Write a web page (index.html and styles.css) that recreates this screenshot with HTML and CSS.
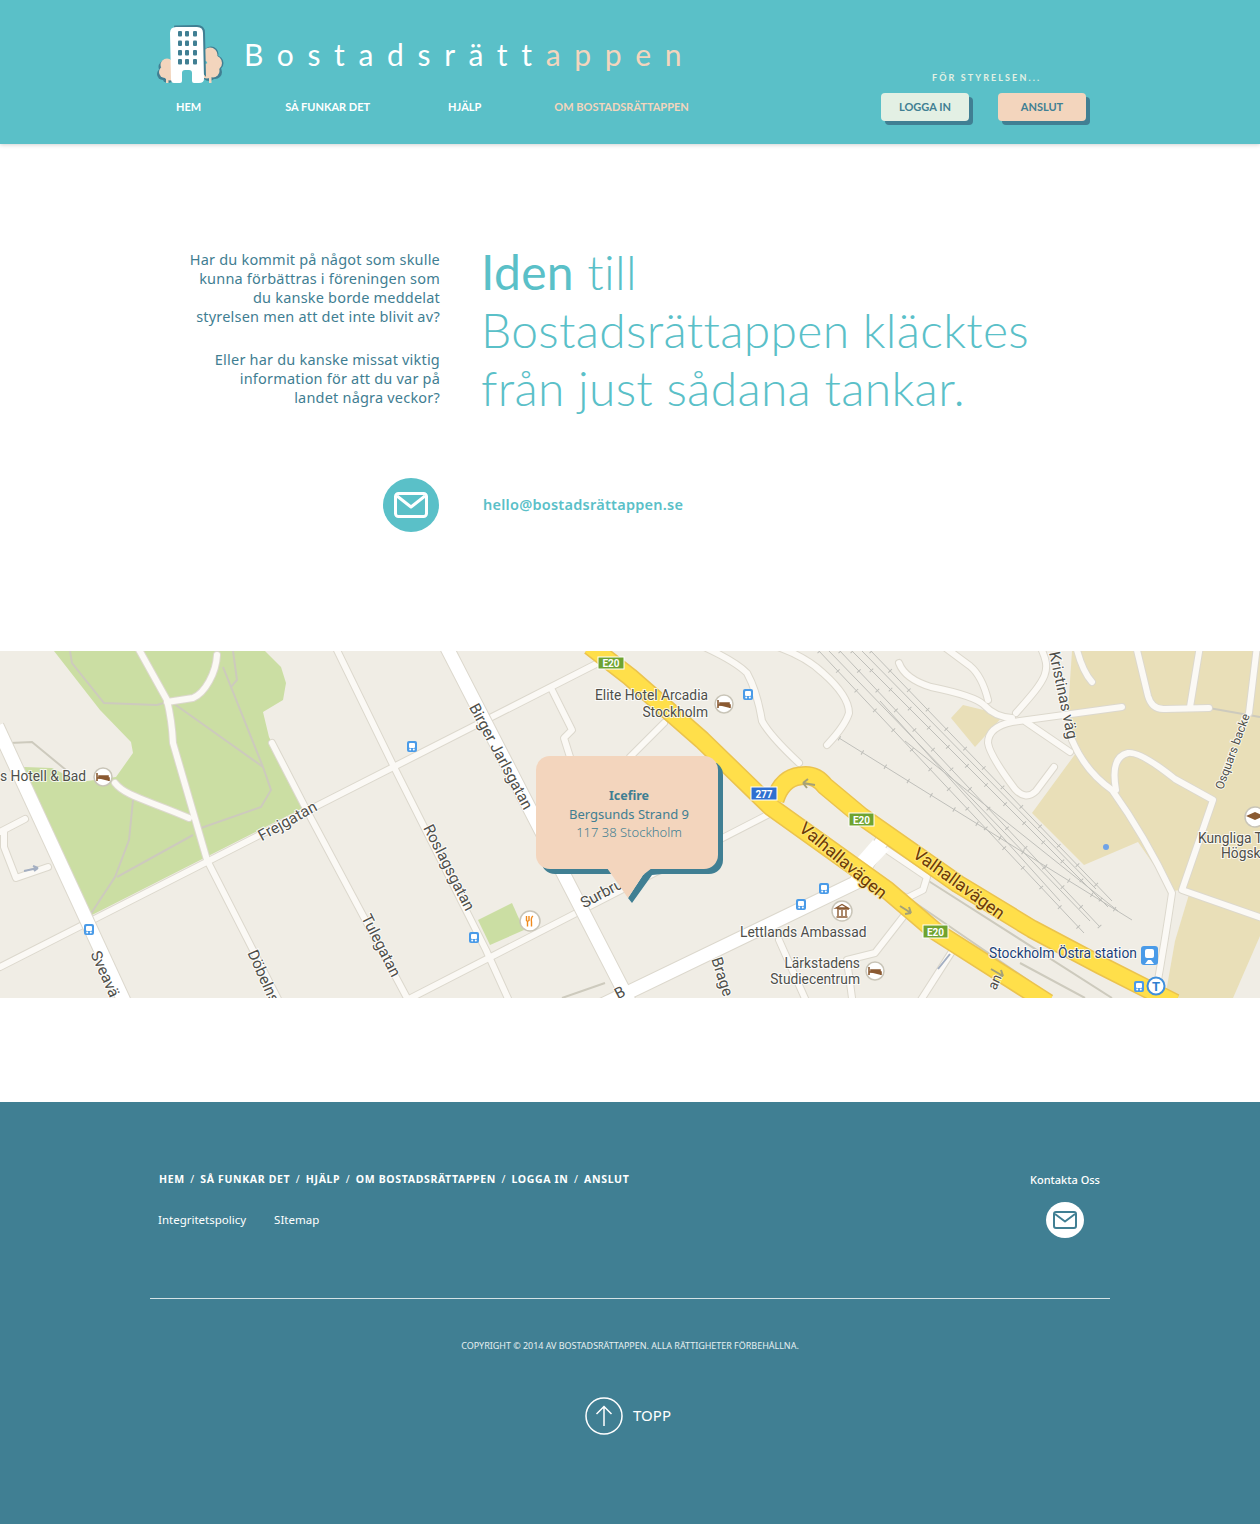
FILE: index.html
```html
<!DOCTYPE html>
<html lang="sv">
<head>
<meta charset="utf-8">
<title>Bostadsrättappen</title>
<link rel="stylesheet" href="styles.css">
</head>
<body>
<header class="header">
  <div class="wrap header-inner">
    <div class="header-left">
      <a class="brand" href="#">
        <svg class="logo" viewBox="0 0 70 64" aria-hidden="true">
          <g class="tree-edge">
            <circle cx="10" cy="45" r="6.500"/><circle cx="8" cy="52" r="6"/><circle cx="13" cy="55" r="6"/><circle cx="56" cy="32" r="7.500"/><circle cx="61" cy="41" r="7.500"/><circle cx="60" cy="50" r="7"/><circle cx="54" cy="52" r="7"/>
          </g>
          <g class="tree">
            <circle cx="12" cy="43" r="6.500"/><circle cx="10" cy="50" r="6"/><circle cx="15" cy="52" r="6.500"/><rect x="11" y="53" width="2.500" height="8"/>
            <circle cx="55" cy="33" r="7.500"/><circle cx="59.500" cy="41" r="7.500"/><circle cx="58" cy="49" r="6.500"/><circle cx="52" cy="49" r="7.500"/><rect x="54" y="50" width="2.500" height="11"/>
          </g>
          <path class="bld-edge" d="M20 3.500 42 3q8 0 8 8l1 44-33-40q0-11 2-12Z"/>
          <path class="bld" d="M21 5h21q6 0 6 6l1 46q0 4-5 4h-5q-2 0-2-2v-8q0-3-3-3h-4q-3 0-3 3v8q0 2-2 2h-6q-3 0-3-4l-1-46q0-6 6-6Z"/>
          <g class="win">
            <rect x="23" y="9" width="4" height="5.500" rx="1"/><rect x="30" y="9" width="4" height="5.500" rx="1"/><rect x="38" y="9" width="4" height="5.500" rx="1"/>
            <rect x="23" y="18.500" width="4" height="5.500" rx="1"/><rect x="30" y="18.500" width="4" height="5.500" rx="1"/><rect x="38" y="18.500" width="4" height="5.500" rx="1"/>
            <rect x="23" y="28" width="4" height="5.500" rx="1"/><rect x="30" y="28" width="4" height="5.500" rx="1"/><rect x="38" y="28" width="4" height="5.500" rx="1"/>
            <rect x="23" y="37" width="4" height="5.500" rx="1"/><rect x="30" y="37" width="4" height="5.500" rx="1"/><rect x="38" y="37" width="4" height="5.500" rx="1"/>
          </g>
        </svg>
        <span class="brand-name">Bostadsrätt<span class="peach">appen</span></span>
      </a>
      <nav class="main-nav">
        <a class="nav-hem" href="#">HEM</a>
        <a class="nav-sa" href="#">SÅ FUNKAR DET</a>
        <a class="nav-hjalp" href="#">HJÄLP</a>
        <a class="nav-om peach" href="#">OM BOSTADSRÄTTAPPEN</a>
      </nav>
    </div>
    <div class="header-right">
      <div class="board-label">FÖR STYRELSEN...</div>
      <div class="buttons">
        <a class="btn btn-mint" href="#">LOGGA IN</a>
        <a class="btn btn-peach" href="#">ANSLUT</a>
      </div>
    </div>
  </div>
</header>

<main class="main">
  <section class="wrap intro">
    <div class="intro-left">
      <p>Har du kommit på något som skulle<br>kunna förbättras i föreningen som<br>du kanske borde meddelat<br>styrelsen men att det inte blivit av?</p>
      <p>Eller har du kanske missat viktig<br>information för att du var på<br>landet några veckor?</p>
    </div>
    <h1 class="headline"><b>Iden</b> till<br>Bostadsrättappen kläcktes<br>från just sådana tankar.</h1>
  </section>
  <section class="wrap contact">
    <div class="contact-icon">
      <span class="mail-circle">
        <svg viewBox="0 0 34 26" class="mail-svg"><rect x="1.500" y="1.500" width="31" height="23" rx="3"/><path d="M3 4 17 15 31 4"/></svg>
      </span>
    </div>
    <a class="email" href="#">hello@bostadsrättappen.se</a>
  </section>
</main>

<section class="map">
  <svg class="map-svg" viewBox="0 0 1260 347" role="img" aria-label="Karta">
    <defs>
      <g id="minor">
        <path d="M335-5 394 116 486 299 510 352"/>
        <path d="M272 92 305 156 407 347"/>
        <path d="M137-5 167 49Q172 70 173 92L207 209 280 352"/>
        <path d="M600 11 0 316"/>
        <path d="M407 349 775 160"/>
        <path d="M167 51 193 47C205 42 216 22 217 4"/>
        <path d="M115 132C125 145 150 150 189 167"/>
        <path d="M0 181 25 168M4 181V196L16 227 48 216"/>
        <path d="M1136-5 1148 45Q1152 59 1165 58L1209 57M1200-5 1190 56M1257-5 1249 62"/>
        <path d="M1122 56 1012 71Q988 76 988 92 990 105 1015 138 1026 150 1036 140L1054 116"/>
        <path d="M899 12Q905 28 931 36 975 45 984 54 995 66 1012 67"/>
        <path d="M943-5 970 15Q982 25 988 49M1040-5C1052 20 1048 26 1016 62M1076-5Q1082 20 1092 31M1026 71 1070 101"/>
        <path d="M775-5Q805 5 823 22 849 45 849 62 845 75 827 94"/>
        <path d="M702-5Q735 10 747 22 757 40 762 70 770 85 799 112"/>
        <path d="M1072 89Q1085 120 1112 139 1145 185 1172 242 1165 290 1154 352"/>
        <path d="M1116 139Q1110 106 1128 102 1140 100 1175 128L1213 149 1182 239 1265 268"/>
        <path d="M887 199 927 226 923 239 907 247 895 241"/>
        <path d="M903 266 875 302 847 309 852 347"/>
        <path d="M951 302 919 352"/>
        <path d="M779 289 807 352"/>
        <path d="M630 106 664 72"/>
        <path d="M552 39 572 79 564 87 570 106"/>
      </g>
      <g id="major">
        <path d="M-3 75 125 352"/>
        <path d="M446-5 534 166 563 222 630 352"/>
        <path d="M600 355 855 232 882 190"/>
      </g>
      <g id="highway">
        <path d="M590-5 630 26 702 89 771 156 887 239 935 280 1048 352"/>
        <path d="M775 149Q782 127 800 125 815 122 825 135L861 165 958 233 1032 278 1100 314 1175 352"/>
      </g>
      <symbol id="bus" viewBox="0 0 10 11"><rect width="10" height="11" rx="2" fill="#4a9be8"/><rect x="2" y="2" width="6" height="5" rx="1" fill="#fff"/><circle cx="3.200" cy="8.500" r="1" fill="#fff"/><circle cx="6.800" cy="8.500" r="1" fill="#fff"/></symbol>
      <symbol id="bed" viewBox="0 0 20 20"><circle cx="10" cy="10" r="9" fill="#fff" stroke="#c9c5b8" stroke-width="1.500"/><path d="M4 6v8M4 11h12v3M6 9h9v2H6Z" stroke="#8a5a32" stroke-width="1.600" fill="#8a5a32"/></symbol>
    </defs>

    <rect class="land" width="1260" height="347"/>
    <path class="park" d="M54 0H265L281 16 286 32 283 49 263 61 269 86 305 156 88 266 24 132V116L52 117 80 131 116 126 133 102 131 91 100 59Z"/>
    <path class="park" d="M478 269 512 252 524 279 490 294Z"/>
    <path class="tan" d="M951 67 963 54 1004 64 975 96Z"/>
    <path class="tan" d="M1072 0H1260V282L1190 238 1172 240 1138 191 1084 214 1032 162 1076 102 1068 60Z"/>
    <path class="tan" d="M1165 347H1233L1260 285V272L1190 240 1175 290Z"/>

    <g class="paths">
      <path d="M70 0 72 12 104 52 157 54 167 51M173 52 263 116M223 16 263 116 271 139 261 156 201 177M233 0 237 29 231 36M133 149 129 189 115 226 90 264M193 184 117 226M10 92 32 91 66 119"/>
      <path d="M927 229 1112 347M911 249 1032 332M1020 312 1085 347M605 332 562 347M1209 57 1260 66"/>
    </g>
    <g class="rails">
      <path d="M819 0 1084 282M829 0 1090 270M840 0 1100 276M852 0 1108 256M862 0 1096 238M871 0 1112 250M839 87 1132 269M880 50 1060 250M905 90 1118 260"/>
    </g>
    <g class="rail-ticks">
      <path d="M819 0 1084 282M840 0 1100 276M852 0 1108 256M871 0 1112 250M839 87 1132 269"/>
    </g>

    <use href="#minor" class="minor-case"/>
    <use href="#minor" class="minor-fill"/>
    <use href="#major" class="major-case"/>
    <use href="#major" class="major-fill"/>
    <path class="crossing" d="M853 212 873 189 889 199 867 222Z"/>
    <use href="#highway" class="hw-case"/>
    <use href="#highway" class="hw-fill"/>
    <path class="hw-arrow" d="M815 134 803 132M803 132 808 128M803 132 807 137"/>
    <path class="hw-arrow" d="M900 255 911 262M911 262 905 263M911 262 909 256M991 318 1003 325M1003 325 997 326M1003 325 1001 319"/>
    <path class="blue-arrow" d="M24 220 38 217M38 217 33 215M38 217 34 220M938 318 950 303"/>

    <g class="shield green"><rect x="598" y="6" width="26" height="12"/><text x="611" y="16">E20</text></g>
    <g class="shield green"><rect x="849" y="162" width="25" height="13"/><text x="861.500" y="172.500">E20</text></g>
    <g class="shield green"><rect x="923" y="274" width="25" height="13"/><text x="935.500" y="284.500">E20</text></g>
    <g class="shield blue"><rect x="751" y="136" width="26" height="13"/><text x="764" y="146.500">277</text></g>

    <use href="#bus" x="407" y="90" width="10" height="11"/>
    <use href="#bus" x="84" y="273" width="10" height="11"/>
    <use href="#bus" x="469" y="281" width="10" height="11"/>
    <use href="#bus" x="743" y="38" width="10" height="11"/>
    <use href="#bus" x="819" y="232" width="10" height="11"/>
    <use href="#bus" x="796" y="248" width="10" height="11"/>
    <use href="#bus" x="1134" y="330" width="10" height="11"/>
    <use href="#bed" x="93" y="116" width="20" height="20"/>
    <use href="#bed" x="714" y="43" width="20" height="20"/>
    <use href="#bed" x="865" y="310" width="20" height="20"/>

    <g class="pin"><circle cx="530" cy="270" r="10"/><path class="fork" d="M526.500 265v4.500l1 1v5M529 265v4.500l-1.500 1M533 265c-1.500 1-2 3-1.500 6v4.500"/></g>
    <g class="pin"><circle cx="842" cy="260" r="10"/><path class="museum" d="M836 257 842 253.500 848 257ZM837 258h12M838 259v6M842 259v6M846 259v6M836.500 266h11"/></g>
    <g class="pin"><circle cx="1255" cy="166" r="10"/><path class="edu" d="M1246 165 1255 161 1264 165 1255 169Z"/></g>
    <circle class="dot" cx="1106" cy="196" r="3"/>
    <g class="tbadge"><circle cx="1156" cy="335" r="8.500"/><text x="1156" y="340">T</text></g>
    <g class="train"><rect x="1141" y="295" width="17" height="19" rx="3"/><rect class="train-w" x="1145" y="298" width="9" height="9" rx="2"/><path class="train-w" d="M1145 313 1148 309h3l3 4Z"/></g>

    <g class="labels">
      <text x="0" y="130">s Hotell &amp; Bad</text>
      <text class="tall" x="288" y="175" text-anchor="middle" transform="rotate(-29 288 171)">Frejgatan</text>
      <text class="tall" x="500" y="110" text-anchor="middle" transform="rotate(62 500 106)">Birger Jarlsgatan</text>
      <text class="tall" x="448" y="221" text-anchor="middle" transform="rotate(63 448 217)">Roslagsgatan</text>
      <text class="tall" x="380" y="299" text-anchor="middle" transform="rotate(63 380 295)">Tulegatan</text>
      <text class="tall" x="251" y="304" transform="rotate(66 251 300)">Döbelns</text>
      <text class="tall" x="94" y="305" transform="rotate(66 94 301)">Sveavä</text>
      <text class="tall" x="582" y="258" transform="rotate(-28 582 254)">Surbru</text>
      <text class="tall" x="715" y="311" transform="rotate(72 715 307)">Brage</text>
      <text class="tall" x="616" y="349" transform="rotate(-28 616 345)">B</text>
      <text x="708" y="49" text-anchor="end">Elite Hotel Arcadia</text>
      <text x="708" y="66" text-anchor="end">Stockholm</text>
      <text x="740" y="286">Lettlands Ambassad</text>
      <text x="860" y="317" text-anchor="end">Lärkstadens</text>
      <text x="860" y="333" text-anchor="end">Studiecentrum</text>
      <text class="tall" x="1053" y="5" transform="rotate(78 1053 1)">Kristinas väg</text>
      <text class="small" x="1219" y="142" transform="rotate(-70 1219 138)">Osquars backe</text>
      <text x="1198" y="192">Kungliga T</text>
      <text x="1221" y="207">Högsk</text>
      <text x="992" y="342" transform="rotate(-65 992 338)">an</text>
      <text class="road-name" x="842" y="215" text-anchor="middle" transform="rotate(40 842 211)">Valhallavägen</text>
      <text class="road-name" x="958" y="238" text-anchor="middle" transform="rotate(36 958 234)">Valhallavägen</text>
      <text class="station" x="989" y="307">Stockholm Östra station</text>
    </g>
  </svg>
  <div class="popup">
    <svg class="popup-tail" viewBox="0 0 60 40" aria-hidden="true">
      <path class="tail-shadow" d="M50 0 41 6 26 29 30 34 50 6 60 5V0Z"/>
      <path class="tail-fill" d="M5-1H50L41 6 26 29Z"/>
    </svg>
    <strong>Icefire</strong>
    <span>Bergsunds Strand 9</span>
    <span class="addr-light">117 38 Stockholm</span>
  </div>
</section>

<footer class="footer">
  <div class="wrap footer-top">
    <div class="footer-links">
      <nav class="footer-nav">
        <a href="#">HEM</a><i>/</i><a href="#">SÅ FUNKAR DET</a><i>/</i><a href="#">HJÄLP</a><i>/</i><a href="#">OM BOSTADSRÄTTAPPEN</a><i>/</i><a href="#">LOGGA IN</a><i>/</i><a href="#">ANSLUT</a>
      </nav>
      <div class="footer-sub"><a href="#">Integritetspolicy</a><a href="#">SItemap</a></div>
    </div>
    <div class="footer-contact">
      <span class="contact-label">Kontakta Oss</span>
      <span class="mail-circle-sm">
        <svg viewBox="0 0 24 18" class="mail-svg-sm"><rect x="1" y="1" width="22" height="16" rx="2"/><path d="M2 3 12 10.500 22 3"/></svg>
      </span>
    </div>
  </div>
  <div class="wrap footer-rule"></div>
  <p class="copyright">COPYRIGHT © 2014 AV BOSTADSRÄTTAPPEN. ALLA RÄTTIGHETER FÖRBEHÅLLNA.</p>
  <a class="top-link" href="#">
    <svg class="top-icon" viewBox="0 0 38 38"><circle cx="19" cy="19" r="18"/><path d="M19 29V10M11.500 17 19 9.500 26.500 17"/></svg>
    <span class="top-text">TOPP</span>
  </a>
</footer>
</body>
</html>
```
FILE: styles.css
```css
* { box-sizing: border-box; }
html, body { margin: 0; padding: 0; }
body { font-family: "Noto Sans", "Open Sans", sans-serif; background: #fff; color: #3f7e92; width: 1260px; }
a { color: inherit; text-decoration: none; }
.wrap { width: 960px; margin: 0 auto; }
.peach { color: #f3d5bd; }

.header { height: 144px; background: #5ac0c8; box-shadow: 0 1px 4px rgba(0, 0, 0, .18); position: relative; }
.header-inner { display: flex; justify-content: space-between; height: 144px; }
.header-left { display: flex; flex-direction: column; }
.brand { display: flex; align-items: center; height: 64px; margin-top: 22px; margin-left: 5px; }
.logo { width: 70px; height: 64px; flex: none; }
.tree-edge { fill: #407f93; }
.tree, .tree rect { fill: #f3d5bd; }
.bld-edge { fill: #407f93; }
.bld { fill: #fff; }
.win { fill: #407f93; }
.brand-name { font-family: "Lato", sans-serif; font-weight: 400; font-size: 30px; letter-spacing: 13.65px; color: #fff; margin-left: 19px; white-space: nowrap; line-height: 40px; }
.main-nav { display: flex; margin-top: 13px; font-family: "Lato", sans-serif; font-weight: 700; font-size: 11px; line-height: 16px; color: #fff; white-space: nowrap; }
.nav-hem { margin-left: 26px; }
.nav-sa { margin-left: 84px; }
.nav-hjalp { margin-left: 78px; }
.nav-om { margin-left: 73px; }

.header-right { display: flex; flex-direction: column; width: 205px; align-items: flex-start; padding-top: 71px; margin-right: 24px; }
.board-label { font-family: "Lato", sans-serif; font-weight: 700; font-size: 9px; line-height: 13px; letter-spacing: 2.1px; color: #e3f0e4; margin-left: 51px; white-space: nowrap; }
.buttons { display: flex; gap: 29px; margin-top: 9px; }
.btn { width: 88px; height: 28px; border-radius: 4px; font-family: "Lato", sans-serif; font-weight: 700; font-size: 11px; line-height: 28px; text-align: center; color: #407f93; box-shadow: 4px 4px 0 #407f93; }
.btn-mint { background: #e3f0e4; }
.btn-peach { background: #f3d5bd; }

.main { height: 507px; padding-top: 106px; }
.intro { display: flex; }
.intro-left { width: 290px; text-align: right; font-family: "Noto Sans", sans-serif; font-size: 14.5px; letter-spacing: .2px; line-height: 19px; color: #3f7e92; flex: none; }
.intro-left p { margin: 0 0 24px; white-space: nowrap; }
.headline { margin: -7px 0 0 41px; font-family: "Lato", sans-serif; font-weight: 300; font-size: 48px; letter-spacing: .3px; line-height: 58px; color: #5ac0c8; white-space: nowrap; }
.headline b { font-weight: 400; }
.contact { display: flex; align-items: center; margin-top: 47px; height: 54px; }
.contact-icon { width: 289px; display: flex; justify-content: flex-end; flex: none; }
.mail-circle { width: 56px; height: 54px; border-radius: 50%; background: #5ac0c8; display: flex; align-items: center; justify-content: center; }
.mail-svg { width: 34px; height: 26px; fill: none; stroke: #fff; stroke-width: 3; stroke-linejoin: round; }
.email { margin: 0 0 2px 44px; font-family: "Noto Sans", sans-serif; font-weight: 600; font-size: 14.5px; letter-spacing: .25px; color: #5ac0c8; }

.map { height: 347px; position: relative; overflow: hidden; }
.map-svg { display: block; width: 1260px; height: 347px; }
.land { fill: #f0ede5; }
.park { fill: #cbdea3; }
.tan { fill: #e9dfb8; }
.paths path { fill: none; stroke: #cdcabd; stroke-width: 2; }
.rails path { fill: none; stroke: #bfbfba; stroke-width: 1; }
.rail-ticks path { fill: none; stroke: #bfbfba; stroke-width: 5; stroke-dasharray: 1 26; }
.minor-case { fill: none; stroke: #dcd8cd; stroke-width: 8; stroke-linecap: round; stroke-linejoin: round; }
.minor-fill { fill: none; stroke: #fbf9f5; stroke-width: 6; stroke-linecap: round; stroke-linejoin: round; }
.major-case { fill: none; stroke: #dcd8cd; stroke-width: 15; }
.major-fill { fill: none; stroke: #fff; stroke-width: 13; }
.hw-case { fill: none; stroke: #ebc34e; stroke-width: 19; stroke-linejoin: round; }
.hw-fill { fill: none; stroke: #ffdf4a; stroke-width: 16; stroke-linejoin: round; }
.crossing { fill: #fff; }
.hw-arrow { fill: none; stroke: #a5a177; stroke-width: 2; }
.blue-arrow { fill: none; stroke: #a4afc2; stroke-width: 2; }
.shield rect { stroke: #fff; stroke-width: 1; }
.shield.green rect { fill: #6ea32f; }
.shield.blue rect { fill: #2f6fd0; }
.shield text { font-family: "Roboto", sans-serif; font-weight: 700; font-size: 10px; fill: #fff; text-anchor: middle; }
.pin circle { fill: #fff; stroke: #c9c5b8; stroke-width: 1.5; }
.fork { fill: none; stroke: #f08a1c; stroke-width: 1.4; }
.museum { fill: none; stroke: #8a5a32; stroke-width: 1.4; }
.edu { fill: #8a5a32; }
.dot { fill: #6fa3e8; }
.tbadge circle { fill: #fff; stroke: #3f8fdc; stroke-width: 2; }
.tbadge text { font-family: "Roboto", sans-serif; font-weight: 700; font-size: 13px; fill: #2f7fd0; text-anchor: middle; }
.train rect { fill: #4a9be8; }
.train .train-w { fill: #fff; }
.labels text { font-family: "Roboto", sans-serif; font-size: 13.8px; fill: #4f4f4a; paint-order: stroke; stroke: #fff; stroke-width: 2px; stroke-opacity: .8; }
.labels .tall { font-size: 15.5px; }
.labels .small { font-size: 12px; }
.labels .road-name { font-size: 17.5px; fill: #6b3a06; stroke: #ffe98a; }
.labels .station { fill: #1c3f78; }

.popup { position: absolute; left: 536px; top: 105px; width: 182px; height: 113px; padding: 31px 0 0 4px; background: #f3d5bd; border-radius: 14px; box-shadow: 5px 5px 0 #407f93; display: flex; flex-direction: column; align-items: center; font-family: "Noto Sans", sans-serif; font-size: 13px; line-height: 18px; color: #3f7e92; white-space: nowrap; }
.popup strong { font-weight: 700; font-size: 12.5px; }
.addr-light { font-weight: 300; }
.popup-tail { position: absolute; left: 66px; top: 113px; width: 60px; height: 40px; overflow: visible; }
.tail-shadow { fill: #407f93; }
.tail-fill { fill: #f3d5bd; }

.footer { margin-top: 104px; height: 422px; background: #407f93; color: #fff; padding-top: 69px; }
.footer-top { display: flex; justify-content: space-between; height: 127px; }
.footer-links { padding-left: 8px; }
.footer-nav { display: flex; align-items: center; font-family: "Noto Sans", sans-serif; font-weight: 700; font-size: 10.5px; letter-spacing: .65px; line-height: 16px; white-space: nowrap; padding-left: 1px; }
.footer-nav i { font-style: normal; font-weight: 400; margin: 0 5.5px; }
.footer-sub { display: flex; gap: 28px; margin-top: 25px; font-family: "Noto Sans", sans-serif; font-size: 11.5px; line-height: 16px; }
.footer-contact { display: flex; flex-direction: column; align-items: center; width: 72px; margin-right: 9px; padding-top: 1px; }
.contact-label { font-family: "Noto Sans", sans-serif; font-size: 11px; line-height: 16px; white-space: nowrap; font-weight: 500; }
.mail-circle-sm { width: 38px; height: 36px; margin-top: 14px; border-radius: 50%; background: #fff; display: flex; align-items: center; justify-content: center; }
.mail-svg-sm { width: 24px; height: 18px; fill: none; stroke: #407f93; stroke-width: 2; stroke-linejoin: round; }
.footer-rule { height: 1px; background: #d5e3e6; }
.copyright { margin: 40px 0 0; text-align: center; font-family: "Noto Sans", sans-serif; font-size: 9px; line-height: 14px; letter-spacing: -.03px; color: #e6eff1; }
.top-link { display: flex; align-items: center; justify-content: center; gap: 10px; margin-top: 44px; height: 38px; font-family: "Noto Sans", sans-serif; font-size: 15px; padding-right: 4px; }
.top-text { margin-bottom: 2px; }
.top-icon { width: 38px; height: 38px; fill: none; stroke: #fff; stroke-width: 1.500; }
```
